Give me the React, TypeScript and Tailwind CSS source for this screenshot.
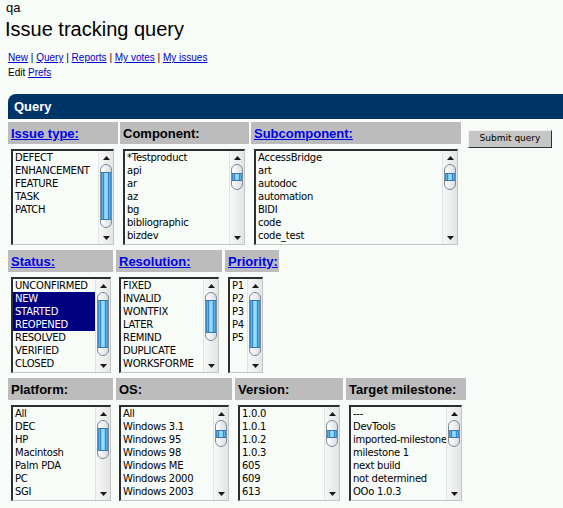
import React from "react";

type Col = {
  title: string;
  link?: boolean;
  colW: string;
  listW: string;
  items: string[];
  thumb: number;
  selected?: string[];
};

function Arrow({ down }: { down?: boolean }) {
  return (
    <svg width="7" height="4" viewBox="0 0 7 4">
      <path d={down ? "M0 0H7L3.5 4Z" : "M0 4H7L3.5 0Z"} fill="#1a1a1a" />
    </svg>
  );
}

function Thumb({ h }: { h: number }) {
  const blue = h > 30 ? h - 16 : 8;
  return (
    <div
      style={{ height: h }}
      className="flex items-center rounded-[6px] border border-[#7d8a97] bg-[linear-gradient(to_right,#ffffff,#d9dee4)]"
    >
      <div
        style={{ height: blue }}
        className="w-full border-y border-[#3a78b0] bg-[linear-gradient(to_right,#2a78c0_0%,#5cb6ea_14%,#2f80c4_24%,#7ccaf2_34%,#a9def8_50%,#7ccaf2_66%,#2f80c4_76%,#5cb6ea_86%,#2a78c0_100%)]"
      />
    </div>
  );
}

function Scrollbar({ thumb }: { thumb: number }) {
  return (
    <div className="flex w-[15px] shrink-0 flex-col border-l border-[#e2e4e4] bg-[linear-gradient(to_right,#f7f7f7,#e3e5e5)]">
      <div className="flex h-[13px] items-center justify-center">
        <Arrow />
      </div>
      <div className="flex-1 px-[1px]">
        <Thumb h={thumb} />
      </div>
      <div className="flex h-[13px] items-center justify-center">
        <Arrow down />
      </div>
    </div>
  );
}

function ListBox({ c }: { c: Col }) {
  return (
    <div
      className={`${c.listW} flex h-[96px] border-b border-l-2 border-r border-t-2 border-b-[#c4c6c6] border-l-[#2e2e2e] border-r-[#c4c6c6] border-t-[#2e2e2e] bg-[#f8fcf8]`}
    >
      <div className="min-w-0 flex-1 overflow-hidden">
        {c.items.map((it) => {
          const sel = c.selected?.includes(it);
          return (
            <div
              key={it}
              className={`h-[13px] whitespace-nowrap pl-[2px] font-['DejaVu_Sans',sans-serif] text-[10px] leading-[13px] tracking-[-0.25px] ${
                sel ? "bg-[#000080] text-white" : "text-black"
              }`}
            >
              {it}
            </div>
          );
        })}
      </div>
      <Scrollbar thumb={c.thumb} />
    </div>
  );
}

function Column({ c }: { c: Col }) {
  return (
    <div className={`${c.colW} flex flex-col`}>
      <div className="flex h-[22px] items-center bg-[#bcbcbc] pl-[3px] pt-[1px] text-[13px] font-bold">
        {c.link ? (
          <a href="#" className="text-[#0000ee] underline">
            {c.title}
          </a>
        ) : (
          <span className="text-black">{c.title}</span>
        )}
      </div>
      <div className="mt-[5px] pl-[3px]">
        <ListBox c={c} />
      </div>
    </div>
  );
}

const row1: Col[] = [
  {
    title: "Issue type:",
    link: true,
    colW: "w-[110px]",
    listW: "w-[103px]",
    items: ["DEFECT", "ENHANCEMENT", "FEATURE", "TASK", "PATCH"],
    thumb: 64,
  },
  {
    title: "Component:",
    colW: "w-[129px]",
    listW: "w-[122px]",
    items: ["*Testproduct", "api", "ar", "az", "bg", "bibliographic", "bizdev"],
    thumb: 26,
  },
  {
    title: "Subcomponent:",
    link: true,
    colW: "w-[210px]",
    listW: "w-[204px]",
    items: ["AccessBridge", "art", "autodoc", "automation", "BIDI", "code", "code_test"],
    thumb: 26,
  },
];

const row2: Col[] = [
  {
    title: "Status:",
    link: true,
    colW: "w-[105px]",
    listW: "w-[100px]",
    items: ["UNCONFIRMED", "NEW", "STARTED", "REOPENED", "RESOLVED", "VERIFIED", "CLOSED"],
    selected: ["NEW", "STARTED", "REOPENED"],
    thumb: 64,
  },
  {
    title: "Resolution:",
    link: true,
    colW: "w-[106px]",
    listW: "w-[100px]",
    items: ["FIXED", "INVALID", "WONTFIX", "LATER", "REMIND", "DUPLICATE", "WORKSFORME"],
    thumb: 49,
  },
  {
    title: "Priority:",
    link: true,
    colW: "w-[54px]",
    listW: "w-[35px]",
    items: ["P1", "P2", "P3", "P4", "P5"],
    thumb: 64,
  },
];

const row3: Col[] = [
  {
    title: "Platform:",
    colW: "w-[105px]",
    listW: "w-[100px]",
    items: ["All", "DEC", "HP", "Macintosh", "Palm PDA", "PC", "SGI"],
    thumb: 39,
  },
  {
    title: "OS:",
    colW: "w-[116px]",
    listW: "w-[110px]",
    items: ["All", "Windows 3.1", "Windows 95", "Windows 98", "Windows ME", "Windows 2000", "Windows 2003"],
    thumb: 27,
  },
  {
    title: "Version:",
    colW: "w-[108px]",
    listW: "w-[102px]",
    items: ["1.0.0", "1.0.1", "1.0.2", "1.0.3", "605", "609", "613"],
    thumb: 27,
  },
  {
    title: "Target milestone:",
    colW: "w-[120px]",
    listW: "w-[113px]",
    items: ["---", "DevTools", "imported-milestone", "milestone 1", "next build", "not determined", "OOo 1.0.3"],
    thumb: 27,
  },
];

export default function App() {
  return (
    <div className="min-h-[508px] w-full overflow-hidden bg-[#f8fcf8] font-['Liberation_Sans',Arial,sans-serif] text-black">
      <div className="pl-[6px] pt-[1px] text-[13px] leading-[13px]">qa</div>
      <h1 className="mt-[3px] pl-[5px] text-[20px] font-normal leading-[24px]">Issue tracking query</h1>
      <div className="mt-[9px] pl-[8px] text-[10px] leading-[15px]">
        <a href="#" className="text-[#0000cc] underline">New</a> |{" "}
        <a href="#" className="text-[#0000cc] underline">Query</a> |{" "}
        <a href="#" className="text-[#0000cc] underline">Reports</a> |{" "}
        <a href="#" className="text-[#0000cc] underline">My votes</a> |{" "}
        <a href="#" className="text-[#0000cc] underline">My issues</a>
      </div>
      <div className="pl-[8px] text-[10px] leading-[15px]">
        Edit <a href="#" className="text-[#0000cc] underline">Prefs</a>
      </div>

      <div className="ml-[8px] mt-[14px] flex h-[25px] items-center rounded-tl-[8px] bg-[#003366] pl-[6px] text-[13px] font-bold text-white">
        Query
      </div>

      <div className="ml-[8px] mt-[3px] flex flex-col gap-[5px]">
        <div className="flex gap-[2px]">
          {row1.map((c) => (
            <Column key={c.title} c={c} />
          ))}
          <div className="ml-[5px] pt-[2px]">
            <button className="h-[18px] w-[84px] border border-b-[#303030] border-l-[#f0f0f0] border-r-[#303030] border-t-[#f0f0f0] bg-[#c6c6c6] font-['DejaVu_Sans',sans-serif] text-[9px] text-black">
              Submit query
            </button>
          </div>
        </div>
        <div className="flex gap-[3px]">
          {row2.map((c) => (
            <Column key={c.title} c={c} />
          ))}
        </div>
        <div className="flex gap-[3px]">
          {row3.map((c) => (
            <Column key={c.title} c={c} />
          ))}
        </div>
      </div>
    </div>
  );
}
